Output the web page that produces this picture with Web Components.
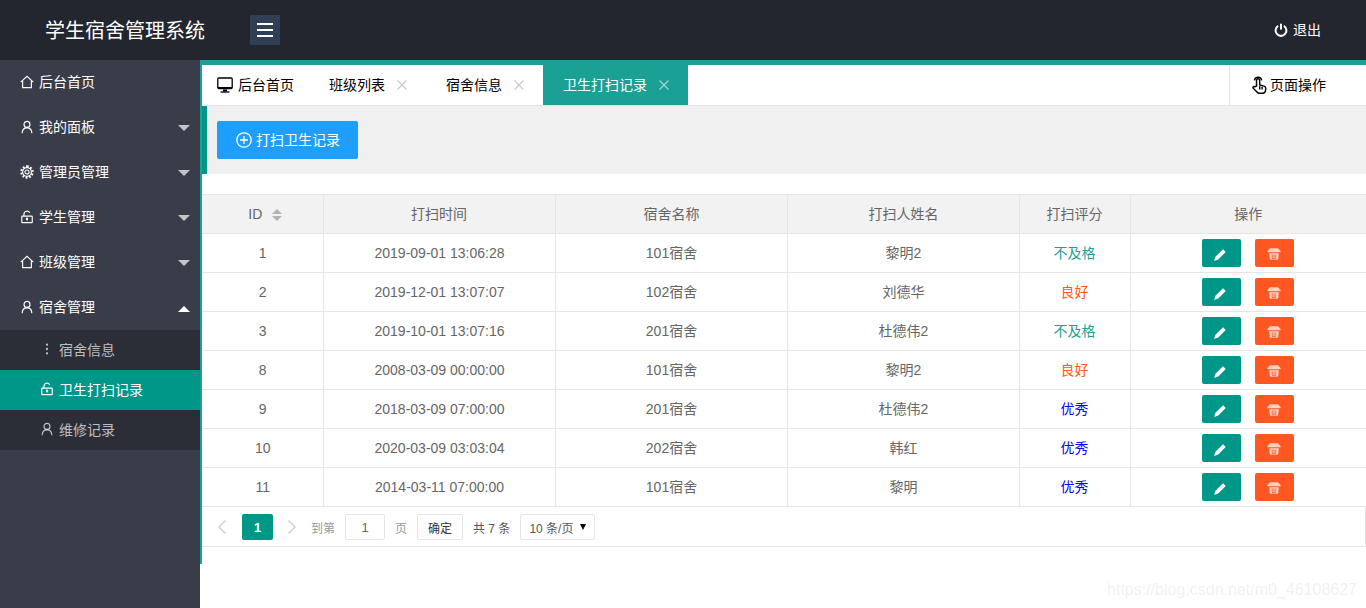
<!DOCTYPE html>
<html lang="zh">
<head>
<meta charset="utf-8">
<title>学生宿舍管理系统</title>
<style>
    html, body { margin: 0; height: 100%; overflow: hidden; background: #fff; }
    body { font: 14px "Liberation Sans", "Noto Sans CJK SC", sans-serif; color: #666; }
</style>
</head>
<body>
<admin-app></admin-app>

<script>
const ICONS = {
    home: `<path d="M.8 8.2 8 1.5l7.200 6.700"/><path d="M3 6.500v8h10v-8"/>`,
    user: `<circle cx="8" cy="5" r="3.4"/><path d="M2.500 15c0-3.600 2.200-6 5.500-6s5.500 2.400 5.500 6"/>`,
    gear: `<circle cx="8" cy="8" r="2.300"/><circle cx="8" cy="8" r="5"/><path stroke-width="2.400" stroke-dasharray="2 1.930" d="M8 1.500a6.500 6.500 0 1 1-.01 0"/>`,
    lock: `<rect x="2" y="7" width="12" height="7.500" rx=".6"/><path d="M4.500 7V4.800a3.500 3.500 0 0 1 6.600-1.600"/><path d="M8 10v2"/><circle cx="8" cy="10" r=".7"/>`,
    dots: `<g fill="currentColor" stroke="none"><circle cx="8" cy="3" r="1.300"/><circle cx="8" cy="8" r="1.300"/><circle cx="8" cy="13" r="1.300"/></g>`,
    power: `<path stroke-width="2.300" d="M4.800 3.200a6.200 6.200 0 1 0 6.400 0"/><path stroke-width="2.300" d="M8 .8v6.700"/>`,
    monitor: `<rect x=".8" y="1" width="14.400" height="10.500" rx="1"/><path stroke-width="2" d="M1 11h14"/><path stroke-width="2" d="M6 13.500h4"/><path d="M3.500 15h9"/>`,
    hand: `<path d="M5.800 9V3.800a1.400 1.400 0 0 1 2.800 0V8l3.800 1c1 .3 1.700 1 1.600 2l-.3 2.300c-.2 1.200-1 2.100-2.200 2.100H8.500c-1 0-1.700-.4-2.300-1.200L2.800 10.800c-.6-1 .6-2 1.500-1.200z"/><path d="M8.600 9v3M10.800 9.500V12"/><path d="M3.900 3.800a3.300 3.300 0 0 1 6.500 0"/>`,
    plus: `<circle cx="8" cy="8" r="7.200"/><path d="M8 4v8M4 8h8"/>`,
    edit: `<path fill="currentColor" stroke="none" d="M1.200 14.800 2.800 10 11.500 1.500 14.500 4.500 6 13z"/>`,
    trash: `<path fill="currentColor" stroke="none" d="M3.500 1.500h9L15.500 4.500v1.500H.5V4.500z"/><path fill="currentColor" stroke="none" d="M2.500 7h11l-.6 6.500c-.1.600-.5 1-1.200 1H4.300c-.7 0-1.100-.4-1.200-1z"/><path stroke="#ff5722" stroke-width=".9" d="M6 8.500v4M8 8.500v4M10 8.500v4M5.500 13.300h5"/>`
};

function icon(name, size) {
    return `<svg width="${size}" height="${size}" viewBox="0 0 16 16" fill="none" stroke="currentColor" stroke-width="1.300" aria-hidden="true">${ICONS[name]}</svg>`;
}

class AdminApp extends HTMLElement {
    constructor() {
        super();
        this.attachShadow({ mode: "open" });
        this.shadowRoot.innerHTML = `
            <style>
                :host { display: grid; grid-template: 60px 548px / 200px 1166px; width: 1366px; height: 608px; position: relative; }
                admin-header { grid-column: 1 / 3; }
                .mark {
                    position: absolute; right: 9px; bottom: 9px;
                    font-size: 16px; color: rgba(150, 150, 150, .14);
                }
            </style>
            <admin-header></admin-header>
            <side-nav></side-nav>
            <main-panel></main-panel>
            <div class="mark">https://blog.csdn.net/m0_46108627</div>
        `;
    }
}

class AdminHeader extends HTMLElement {
    constructor() {
        super();
        this.attachShadow({ mode: "open" });
        this.shadowRoot.innerHTML = `
            <style>
                :host { display: flex; align-items: center; background: #23262e; color: #fff; height: 60px; }
                .title { width: 205px; padding-left: 45px; box-sizing: border-box; font-size: 20px; white-space: nowrap; margin-top: -2px; }
                .burger {
                    width: 30px; height: 30px; margin-left: 45px; background: #2f4056;
                    display: flex; flex-direction: column; justify-content: center; align-items: center; gap: 4px;
                }
                .burger i { display: block; width: 16px; height: 2px; background: #fff; }
                .logout { margin-left: auto; margin-right: 45px; display: flex; align-items: center; gap: 5px; font-size: 14px; }
                .logout span { margin-top: -2px; }
                svg { display: block; }
            </style>
            <div class="title">学生宿舍管理系统</div>
            <div class="burger"><i></i><i></i><i></i></div>
            <div class="logout">${icon("power", 14)}<span>退出</span></div>
        `;
    }
}

class NavItem extends HTMLElement {
    static get observedAttributes() {
        return ["icon", "arrow"];
    }
    constructor() {
        super();
        this.attachShadow({ mode: "open" });
        this.render();
    }
    attributeChangedCallback() {
        this.render();
    }
    render() {
        const arrow = this.getAttribute("arrow");
        this.shadowRoot.innerHTML = `
            <style>
                :host { display: flex; align-items: center; box-sizing: border-box; height: 45px; padding-left: 20px; padding-bottom: 2px; color: #fff; font-size: 14px; position: relative; }
                :host([sub]) { height: 40px; padding-left: 40px; color: rgba(255, 255, 255, .7); }
                :host([active]) { background: #009688; color: #fff; }
                svg { display: block; margin-right: 5px; }
                .arrow { position: absolute; left: 178px; top: 50%; width: 0; height: 0; border: 6px solid transparent; }
                .down { margin-top: -3px; border-top-color: rgba(255, 255, 255, .7); border-bottom-width: 0; }
                .up { margin-top: -2px; border-bottom-color: #fff; border-top-width: 0; }
                slot { display: block; margin-top: -1px; }
            </style>
            ${icon(this.getAttribute("icon") || "home", 14)}
            <slot></slot>
            ${arrow ? `<span class="arrow ${arrow}"></span>` : ""}
        `;
    }
}

class SideNav extends HTMLElement {
    constructor() {
        super();
        this.attachShadow({ mode: "open" });
        this.shadowRoot.innerHTML = `
            <style>
                :host { display: block; background: #393d49; height: 548px; }
                .sub { background: #2b2e37; border-radius: 0 0 2px 2px; }
            </style>
            <nav-item icon="home">后台首页</nav-item>
            <nav-item icon="user" arrow="down">我的面板</nav-item>
            <nav-item icon="gear" arrow="down">管理员管理</nav-item>
            <nav-item icon="lock" arrow="down">学生管理</nav-item>
            <nav-item icon="home" arrow="down">班级管理</nav-item>
            <nav-item icon="user" arrow="up">宿舍管理</nav-item>
            <div class="sub">
                <nav-item sub icon="dots">宿舍信息</nav-item>
                <nav-item sub active icon="lock">卫生打扫记录</nav-item>
                <nav-item sub icon="user">维修记录</nav-item>
            </div>
        `;
    }
}

class TabItem extends HTMLElement {
    constructor() {
        super();
        this.attachShadow({ mode: "open" });
        this.render();
    }
    render() {
        this.shadowRoot.innerHTML = `
            <style>
                :host { display: flex; align-items: center; height: 40px; padding: 0 19px 0 20px; color: #000; font-size: 14px; white-space: nowrap; }
                :host([active]) { background: #1aa094; color: #fff; }
                slot { display: block; margin-top: -2px; }
                .x { display: block; margin-left: 12px; color: #c9c9c9; }
                :host([active]) .x { color: rgba(255, 255, 255, .6); }
            </style>
            <slot></slot>
            <svg class="x" width="10" height="10" viewBox="0 0 10 10" fill="none" stroke="currentColor" stroke-width="1.200"><path d="M.5.5l9 9M9.500.5l-9 9"/></svg>
        `;
    }
}

class TabBar extends HTMLElement {
    constructor() {
        super();
        this.attachShadow({ mode: "open" });
        this.shadowRoot.innerHTML = `
            <style>
                :host { display: flex; height: 40px; border-top: 5px solid #1aa094; border-bottom: 1px solid #e2e2e2; background: #fff; color: #000; font-size: 14px; }
                .home { display: flex; align-items: center; gap: 5px; width: 112px; padding-left: 15px; box-sizing: border-box; }
                .tabs { display: flex; flex: 1; }
                .tabs tab-item:first-child { padding-left: 15px; }
                .ops { display: flex; align-items: center; width: 137px; box-sizing: border-box; padding-left: 20px; gap: 2px; border-left: 1px solid #e2e2e2; }
                .home span, .ops span { margin-top: -2px; }
                svg { display: block; }
            </style>
            <div class="home">${icon("monitor", 16)}<span>后台首页</span></div>
            <div class="tabs">
                <tab-item>班级列表</tab-item>
                <tab-item>宿舍信息</tab-item>
                <tab-item active>卫生打扫记录</tab-item>
            </div>
            <div class="ops">${icon("hand", 18)}<span>页面操作</span></div>
        `;
    }
}

class ToolBar extends HTMLElement {
    constructor() {
        super();
        this.attachShadow({ mode: "open" });
        this.shadowRoot.innerHTML = `
            <style>
                :host { display: block; padding: 15px 10px; background: #f0f0f0; border-left: 5px solid #009688; height: 38px; }
                button {
                    display: flex; align-items: center; gap: 4px; height: 38px; width: 141px; padding: 0 0 0 19px;
                    background: #1e9fff; color: #fff; border: 0; border-radius: 2px;
                    font: 14px "Liberation Sans", "Noto Sans CJK SC", sans-serif;
                }
                slot { display: block; margin-top: -2px; }
                svg { display: block; }
            </style>
            <button>${icon("plus", 16)}<slot></slot></button>
        `;
    }
}

class RecordTable extends HTMLElement {
    constructor() {
        super();
        this.attachShadow({ mode: "open" });
        const rows = [
            [1, "2019-09-01 13:06:28", "101宿舍", "黎明2", "不及格"],
            [2, "2019-12-01 13:07:07", "102宿舍", "刘德华", "良好"],
            [3, "2019-10-01 13:07:16", "201宿舍", "杜德伟2", "不及格"],
            [8, "2008-03-09 00:00:00", "101宿舍", "黎明2", "良好"],
            [9, "2018-03-09 07:00:00", "201宿舍", "杜德伟2", "优秀"],
            [10, "2020-03-09 03:03:04", "202宿舍", "韩红", "优秀"],
            [11, "2014-03-11 07:00:00", "101宿舍", "黎明", "优秀"]
        ];
        const gradeClass = { "不及格": "bad", "良好": "ok", "优秀": "top" };
        const body = rows.map(r => `
            <tr>
                <td class="nudge">${r[0]}</td><td class="nudge">${r[1]}</td>
                <td class="nudge cjk">${r[2]}</td><td class="nudge cjk">${r[3]}</td>
                <td class="cjk ${gradeClass[r[4]]}">${r[4]}</td>
                <td><div class="acts"><a class="edit">${icon("edit", 14)}</a><a class="del">${icon("trash", 14)}</a></div></td>
            </tr>`).join("");
        this.shadowRoot.innerHTML = `
            <style>
                :host { display: block; margin-top: 20px; }
                table { border-collapse: collapse; table-layout: fixed; width: 1164px; color: #666; font-size: 14px; }
                th, td { border: 1px solid #e6e6e6; padding: 0; height: 38px; text-align: center; font-weight: 400; box-sizing: content-box; }
                th { background: #f2f2f2; }
                .cjk { height: 36px; padding-bottom: 2px; }
                .nudge { padding-left: 1px; }
                .id { padding-left: 6px; }
                tr > :first-child { border-left: 0; }
                tr > :last-child { border-right: 0; }
                .sort { display: inline-block; vertical-align: middle; margin-left: 10px; }
                .sort i { display: block; width: 0; height: 0; border: 5px solid transparent; }
                .sort i:first-child { border-bottom-color: #b2b2b2; border-top-width: 0; margin-bottom: 2px; }
                .sort i:last-child { border-top-color: #b2b2b2; border-bottom-width: 0; }
                .bad { color: #1aa094; }
                .ok { color: #ff5722; }
                .top { color: #0000ff; }
                .acts { display: flex; justify-content: center; gap: 14px; }
                .acts a { display: flex; align-items: center; justify-content: center; width: 39px; height: 28px; border-radius: 2px; color: #fff; }
                .acts .edit { background: #009688; }
                .acts .edit svg { margin: 3px 3px 0 0; }
                .acts .del { background: #ff5722; color: #ffd0c0; }
                .acts .del svg { margin: 2px 2px 0 0; }
                svg { display: block; }
            </style>
            <table>
                <colgroup><col style="width:121px"><col style="width:232px"><col style="width:232px"><col style="width:232px"><col style="width:111px"><col></colgroup>
                <thead><tr>
                    <th class="id">ID<span class="sort"><i></i><i></i></span></th>
                    <th class="cjk">打扫时间</th><th class="cjk nudge">宿舍名称</th><th class="cjk nudge">打扫人姓名</th><th class="cjk">打扫评分</th><th class="cjk">操作</th>
                </tr></thead>
                <tbody>${body}</tbody>
            </table>
        `;
    }
}

class PagerBar extends HTMLElement {
    constructor() {
        super();
        this.attachShadow({ mode: "open" });
        this.shadowRoot.innerHTML = `
            <style>
                :host {
                    display: flex; align-items: center; height: 40px; box-sizing: border-box; padding: 1px 0 0 15px;
                    border-bottom: 1px solid #e6e6e6; border-right: 1px solid #e6e6e6;
                    font-size: 12px; color: #333;
                }
                svg { display: block; }
                .chev { width: 10px; color: #d2d2d2; }
                .cur { width: 31px; height: 26px; margin: 0 14px 0 15px; background: #009688; color: #fff; font-size: 13px; font-weight: 700; display: flex; align-items: center; justify-content: center; border-radius: 2px; }
                .cur + .chev { margin-right: 14px; }
                .lbl { color: #999; }
                .box { height: 26px; box-sizing: border-box; border: 1px solid #e6e6e6; border-radius: 2px; display: flex; align-items: center; justify-content: center; }
                .num { width: 40px; margin: 0 10px; color: #666; font-size: 13px; }
                .ok { width: 46px; margin: 0 10px; color: #333; }
                .total { margin-right: 10px; color: #555; white-space: nowrap; }
                .size { width: 75px; justify-content: flex-start; padding-left: 8px; gap: 7px; color: #555; white-space: nowrap; }
                .size b { font-size: 0; width: 0; height: 0; border: 3.5px solid transparent; border-top: 6px solid #000; border-bottom-width: 0; }
            </style>
            <span class="chev"><svg width="10" height="16" viewBox="0 0 10 16" fill="none" stroke="currentColor" stroke-width="1.500"><path d="M8.500 1.500 2 8l6.500 6.500"/></svg></span>
            <span class="cur">1</span>
            <span class="chev"><svg width="10" height="16" viewBox="0 0 10 16" fill="none" stroke="currentColor" stroke-width="1.500"><path d="M1.500 1.500 8 8l-6.500 6.500"/></svg></span>
            <span class="lbl">到第</span>
            <span class="box num">1</span>
            <span class="lbl">页</span>
            <span class="box ok">确定</span>
            <span class="total">共 7 条</span>
            <span class="box size">10 条/页<b></b></span>
        `;
    }
}

class MainPanel extends HTMLElement {
    constructor() {
        super();
        this.attachShadow({ mode: "open" });
        this.shadowRoot.innerHTML = `
            <style>
                :host { display: block; height: 504px; border-left: 2px solid #1aa094; background: #fff; box-sizing: border-box; width: 1166px; }
            </style>
            <tab-bar></tab-bar>
            <tool-bar>打扫卫生记录</tool-bar>
            <record-table></record-table>
            <pager-bar></pager-bar>
        `;
    }
}

customElements.define("nav-item", NavItem);
customElements.define("side-nav", SideNav);
customElements.define("admin-header", AdminHeader);
customElements.define("tab-item", TabItem);
customElements.define("tab-bar", TabBar);
customElements.define("tool-bar", ToolBar);
customElements.define("record-table", RecordTable);
customElements.define("pager-bar", PagerBar);
customElements.define("main-panel", MainPanel);
customElements.define("admin-app", AdminApp);
</script>
</body>
</html>
